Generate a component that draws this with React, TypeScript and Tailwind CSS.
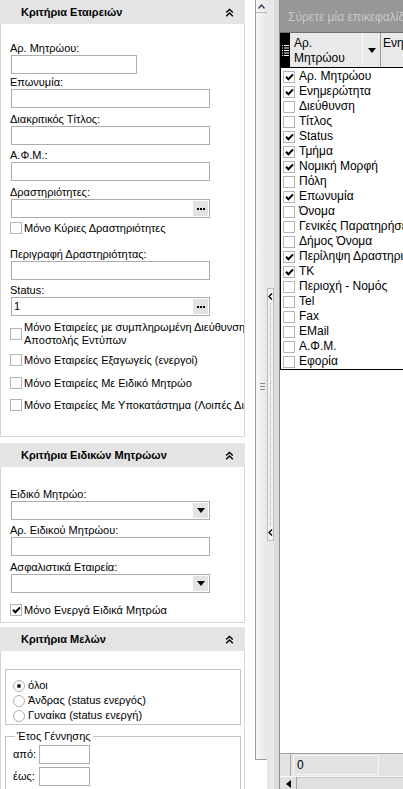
import React from 'react';

const Tick = () => (
  <svg width="9" height="8" viewBox="0 0 9 8">
    <path d="M1 3.8L3.4 6.2L8 1.4" fill="none" stroke="#000" strokeWidth="2" />
  </svg>
);

const Chevrons = () => (
  <svg width="9" height="9" viewBox="0 0 9 9">
    <path d="M1.2 4.6L4.5 1.4L7.8 4.6M1.2 8.2L4.5 5L7.8 8.2" fill="none" stroke="#000" strokeWidth="1.4" />
  </svg>
);

function Header({ title }: { title: string }) {
  return (
    <div className="h-[24px] bg-[#e4e4e4] flex items-center justify-between pl-[21px] pr-[11px]">
      <span className="font-bold text-[11px] whitespace-nowrap">{title}</span>
      <Chevrons />
    </div>
  );
}

function Label({ text, className }: { text: string; className?: string }) {
  return <div className={`h-[14px] leading-[14px] whitespace-nowrap ${className ?? ''}`}>{text}</div>;
}

function TextBox({ w, value, btn }: { w: string; value?: string; btn?: 'dots' | 'arrow' }) {
  return (
    <div className={`${w} ml-[1px] h-[19px] border border-[#adadad] bg-white flex items-center shrink-0`}>
      <span className="flex-1 pl-[2px] leading-[17px] text-[11px]">{value}</span>
      {btn === 'dots' && (
        <div className="w-[15px] h-[15px] mr-[1px] bg-[#e3e3e3] flex items-center justify-center gap-[1px]">
          <span className="w-[2px] h-[2px] bg-black" />
          <span className="w-[2px] h-[2px] bg-black" />
          <span className="w-[2px] h-[2px] bg-black" />
        </div>
      )}
      {btn === 'arrow' && (
        <div className="w-[15px] h-[15px] mr-[1px] bg-[#e3e3e3] flex items-center justify-center">
          <svg width="8" height="5" viewBox="0 0 8 5">
            <path d="M0 0H8L4 5Z" fill="#000" />
          </svg>
        </div>
      )}
    </div>
  );
}

function Box({ checked }: { checked?: boolean }) {
  return (
    <div className="w-[12px] h-[12px] shrink-0 border border-[#b4b4b4] bg-white flex items-center justify-center">
      {checked && <Tick />}
    </div>
  );
}

function Check({ text, checked, className }: { text: React.ReactNode; checked?: boolean; className?: string }) {
  return (
    <div className={`flex items-center gap-[2px] whitespace-nowrap ${className ?? ''}`}>
      <Box checked={checked} />
      <div className="leading-[13px]">{text}</div>
    </div>
  );
}

function Radio({ text, on }: { text: string; on?: boolean }) {
  return (
    <div className="h-[15px] flex items-center gap-[3px] pl-[7px] whitespace-nowrap">
      <div className="w-[12px] h-[12px] rounded-full border border-[#b0b0b0] bg-white flex items-center justify-center">
        {on && <div className="w-[4px] h-[4px] rounded-full bg-[#222]" />}
      </div>
      <span>{text}</span>
    </div>
  );
}

const columns: [string, boolean][] = [
  ['Αρ. Μητρώου', true],
  ['Ενημερώτητα', true],
  ['Διεύθυνση', false],
  ['Τίτλος', false],
  ['Status', true],
  ['Τμήμα', true],
  ['Νομική Μορφή', true],
  ['Πόλη', false],
  ['Επωνυμία', true],
  ['Όνομα', false],
  ['Γενικές Παρατηρήσεις', false],
  ['Δήμος Όνομα', false],
  ['Περίληψη Δραστηριότητας', true],
  ['ΤΚ', true],
  ['Περιοχή - Νομός', false],
  ['Tel', false],
  ['Fax', false],
  ['EMail', false],
  ['Α.Φ.Μ.', false],
  ['Εφορία', false],
];

export default function App() {
  return (
    <div className="w-[403px] h-[789px] overflow-hidden flex bg-white text-black text-[11px] font-['Liberation_Sans',Arial,sans-serif]">
      {/* filter panels */}
      <div className="w-[255px] shrink-0 flex flex-col">
        <div className="w-[245px]">
          <Header title="Κριτήρια Εταιρειών" />
          <div className="h-[413px] border-x border-b border-[#d6d6d6] pl-[9px] flex flex-col overflow-hidden">
            <Label text="Αρ. Μητρώου:" className="mt-[17px]" />
            <TextBox w="w-[126px]" />
            <Label text="Επωνυμία:" className="mt-[1px]" />
            <TextBox w="w-[199px]" />
            <Label text="Διακριτικός Τίτλος:" className="mt-[4px]" />
            <TextBox w="w-[199px]" />
            <Label text="Α.Φ.Μ.:" className="mt-[3px]" />
            <TextBox w="w-[199px]" />
            <Label text="Δραστηριότητες:" className="mt-[4px]" />
            <TextBox w="w-[199px]" btn="dots" />
            <Check text="Μόνο Κύριες Δραστηριότητες" className="mt-[3px] h-[14px]" />
            <Label text="Περιγραφή Δραστηριότητας:" className="mt-[12px]" />
            <TextBox w="w-[199px]" />
            <Label text="Status:" className="mt-[3px]" />
            <TextBox w="w-[199px]" value="1" btn="dots" />
            <Check
              text={<>Μόνο Εταιρείες με συμπληρωμένη Διεύθυνση<br />Αποστολής Εντύπων</>}
              className="mt-[5px] h-[26px]"
            />
            <Check text="Μόνο Εταιρείες Εξαγωγείς (ενεργοί)" className="mt-[6px] h-[14px]" />
            <Check text="Μόνο Εταιρείες Με Ειδικό Μητρώο" className="mt-[9px] h-[14px]" />
            <Check text="Μόνο Εταιρείες Με Υποκατάστημα (Λοιπές Διευθύνσεις)" className="mt-[8px] h-[14px]" />
          </div>
        </div>

        <div className="w-[245px] mt-[6px]">
          <Header title="Κριτήρια Ειδικών Μητρώων" />
          <div className="h-[156px] border-x border-b border-[#d6d6d6] pl-[9px] flex flex-col overflow-hidden">
            <Label text="Ειδικό Μητρώο:" className="mt-[20px]" />
            <TextBox w="w-[199px]" btn="arrow" />
            <Label text="Αρ. Ειδικού Μητρώου:" className="mt-[3px]" />
            <TextBox w="w-[199px]" />
            <Label text="Ασφαλιστικά Εταιρεία:" className="mt-[4px]" />
            <TextBox w="w-[199px]" btn="arrow" />
            <Check text="Μόνο Ενεργά Ειδικά Μητρώα" checked className="mt-[10px] h-[14px]" />
          </div>
        </div>

        <div className="w-[245px] mt-[4px] flex-1 flex flex-col">
          <Header title="Κριτήρια Μελών" />
          <div className="flex-1 border-x border-[#d6d6d6] pl-[4px] flex flex-col">
            <div className="w-[236px] mt-[18px] border border-[#c4c4c4] pt-[8px] pb-[1px]">
              <Radio text="όλοι" on />
              <Radio text="Άνδρας (status ενεργός)" />
              <Radio text="Γυναίκα (status ενεργή)" />
            </div>
            <fieldset className="w-[236px] mt-[4px] border border-[#c4c4c4] pl-[7px] pb-[4px]">
              <legend className="ml-[2px] px-[2px] leading-[14px] text-[11px]">Έτος Γέννησης</legend>
              <div className="flex items-center h-[19px] mt-[2px]">
                <span className="w-[25px]">από:</span>
                <TextBox w="w-[51px]" />
              </div>
              <div className="flex items-center h-[19px] mt-[3px]">
                <span className="w-[25px]">έως:</span>
                <TextBox w="w-[51px]" />
              </div>
            </fieldset>
          </div>
        </div>
      </div>

      {/* splitter */}
      <div className="w-[25px] shrink-0 flex">
        <div className="w-[12px] h-[760px] border-l border-b border-[#9c9c9c] bg-gradient-to-r from-[#f8f8f8] to-[#e6e6e6] flex flex-col">
          <div className="h-[13px] border-b border-[#b8b8b8] flex items-center justify-center">
            <svg width="7" height="5" viewBox="0 0 7 5">
              <path d="M0.5 4.5L3.5 1L6.5 4.5" fill="none" stroke="#3a3a5a" strokeWidth="1.4" />
            </svg>
          </div>
          <div className="mt-[370px] pl-[4px] flex flex-col gap-[2px]">
            <span className="w-[5px] h-[1px] bg-[#8a8a8a]" />
            <span className="w-[5px] h-[1px] bg-[#8a8a8a]" />
            <span className="w-[5px] h-[1px] bg-[#8a8a8a]" />
          </div>
        </div>
        <div className="w-[7px] bg-[#e8e8e8]">
          <div className="mt-[288px] h-[253px] border border-[#bcbcbc] bg-[#f2f2f2] flex flex-col items-center">
            <svg width="5" height="7" viewBox="0 0 5 7" className="mt-[4px]">
              <path d="M4 0.5L1 3.5L4 6.5" fill="none" stroke="#000" strokeWidth="1.3" />
            </svg>
            <div className="flex-1 mt-[3px] mb-[3px] border-l border-dotted border-[#a8a8a8]" />
            <svg width="5" height="7" viewBox="0 0 5 7" className="mb-[4px]">
              <path d="M4 0.5L1 3.5L4 6.5" fill="none" stroke="#000" strokeWidth="1.3" />
            </svg>
          </div>
        </div>
        <div className="w-[6px] bg-[#dcdcdc] border-r border-[#8c8c8c]" />
      </div>

      {/* grid */}
      <div className="flex-1 min-w-0 flex flex-col overflow-hidden text-[12px]">
        <div className="h-[32px] shrink-0 bg-[#979797] text-[#c9c9c9] pl-[8px] pt-[8px] whitespace-nowrap">
          Σύρετε μία επικεφαλίδα στήλης εδώ για ομαδοποίηση
        </div>
        <div className="h-[35px] shrink-0 flex bg-[#e9e9e9] border-t border-[#6e6e6e]">
          <div className="w-[10px] shrink-0 bg-black flex items-center justify-center">
            <svg width="7" height="13" viewBox="0 0 7 13">
              {[1, 3.5, 6, 8.5, 11].map((y) => (
                <g key={y}>
                  <rect x="0" y={y} width="1" height="1" fill="#fff" />
                  <rect x="2" y={y} width="5" height="1" fill="#fff" />
                </g>
              ))}
            </svg>
          </div>
          <div className="w-[72px] shrink-0 pl-[4px] pt-[3px] leading-[15px]">
            Αρ.<br />Μητρώου
          </div>
          <div className="w-[19px] shrink-0 border-l border-[#fafafa] border-r border-r-[#9a9a9a] flex items-center justify-center">
            <svg width="8" height="5" viewBox="0 0 8 5">
              <path d="M0 0H8L4 5Z" fill="#000" />
            </svg>
          </div>
          <div className="shrink-0 pl-[2px] pt-[3px] leading-[15px] whitespace-nowrap">Ενημερώτητα</div>
        </div>
        <div className="w-[150px] shrink-0 border border-black bg-white pt-[1px]">
          {columns.map(([name, on]) => (
            <div key={name} className="h-[15px] flex items-center pl-[2px] gap-[4px] whitespace-nowrap">
              <Box checked={on} />
              <span className="leading-[15px]">{name}</span>
            </div>
          ))}
        </div>
        <div className="flex-1 bg-white" />
        <div className="h-[23px] shrink-0 flex bg-[#e2e2e2] border-t border-[#a4a4a4]">
          <div className="w-[11px] border-r border-[#a8a8a8]" />
          <div className="ml-[2px] mt-[1px] w-[86px] h-[20px] border border-[#f6f6f6] pl-[3px] leading-[18px]">0</div>
        </div>
        <div className="h-[13px] shrink-0 flex bg-[#e0e0e0] border-t border-[#f8f8f8]">
          <div className="w-[17px] border-r border-[#a4a4a4] flex items-end justify-center pb-[1px]">
            <svg width="5" height="8" viewBox="0 0 5 8">
              <path d="M5 0V8L0 4Z" fill="#000" />
            </svg>
          </div>
          <div className="flex-1 border-t border-[#c8c8c8]" />
        </div>
      </div>
    </div>
  );
}
